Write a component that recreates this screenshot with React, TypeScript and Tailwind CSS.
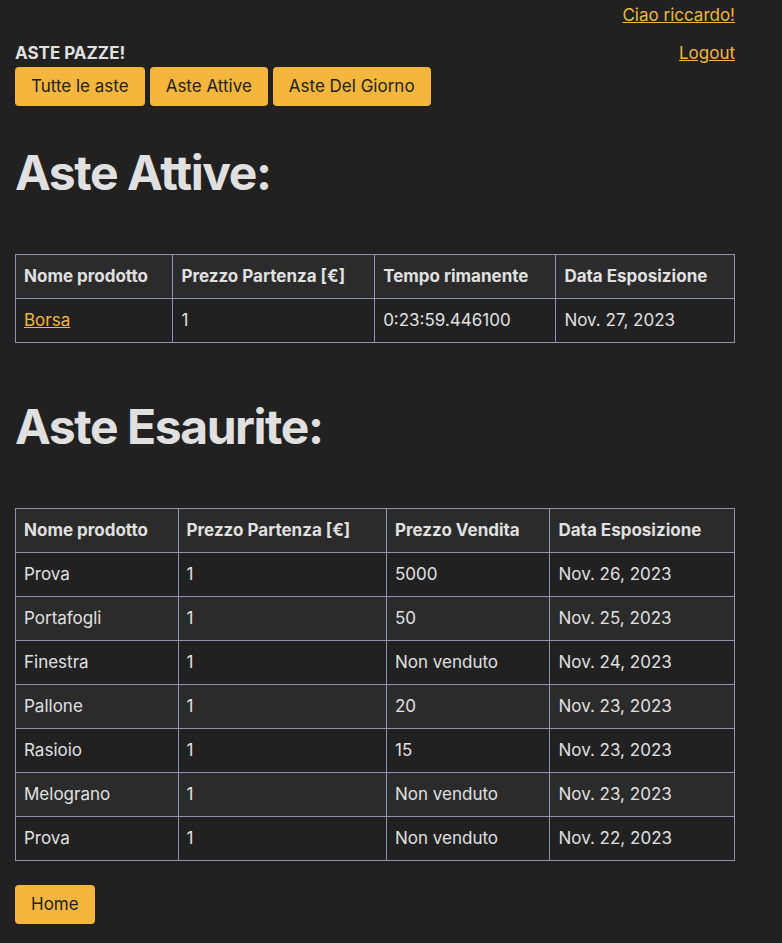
const active = [{ name: "Borsa", price: "1", time: "0:23:59.446100", date: "Nov. 27, 2023" }];

const sold = [
  { name: "Prova", price: "1", sale: "5000", date: "Nov. 26, 2023" },
  { name: "Portafogli", price: "1", sale: "50", date: "Nov. 25, 2023" },
  { name: "Finestra", price: "1", sale: "Non venduto", date: "Nov. 24, 2023" },
  { name: "Pallone", price: "1", sale: "20", date: "Nov. 23, 2023" },
  { name: "Rasioio", price: "1", sale: "15", date: "Nov. 23, 2023" },
  { name: "Melograno", price: "1", sale: "Non venduto", date: "Nov. 23, 2023" },
  { name: "Prova", price: "1", sale: "Non venduto", date: "Nov. 22, 2023" },
];

const th = "border border-[#8e93aa] px-2 h-[44px] text-left font-bold";
const td = "border border-[#8e93aa] px-2 h-[44px]";

const NavButton: React.FC<{ label: string }> = ({ label }) => (
  <button className="bg-[#f4b63d] text-[#222] rounded-[4px] h-[39px] px-[16px] text-[17px]">
    {label}
  </button>
);

export default function App() {
  return (
    <div
      className="min-h-[943px] bg-[#212121] text-[#e0e0e0] text-[17px] px-[15px] pb-[19px]"
      style={{ fontFamily: "Inter, 'Noto Sans', sans-serif" }}
    >
      <div className="w-[720px]">
        <div className="flex justify-end pt-[3px]">
          <a href="#" className="text-[#f4b63d] underline text-[17px] leading-[24px]">
            Ciao riccardo!
          </a>
        </div>
        <div className="flex justify-between items-start mt-[14px]">
          <div>
            <div className="font-bold text-[17px] leading-[24px] mb-[2px]">ASTE PAZZE!</div>
            <div className="flex gap-[5px]">
              <NavButton label="Tutte le aste" />
              <NavButton label="Aste Attive" />
              <NavButton label="Aste Del Giorno" />
            </div>
          </div>
          <a href="#" className="text-[#f4b63d] underline text-[17px] leading-[24px]">
            Logout
          </a>
        </div>

        <h1 className="text-[48px] font-bold leading-none tracking-[-0.03em] mt-[43px] mb-[57px]">Aste Attive:</h1>
        <table className="w-full border-collapse">
          <thead>
            <tr className="bg-[#2b2b2b]">
              <th className={th}>Nome prodotto</th>
              <th className={th}>Prezzo Partenza [€]</th>
              <th className={th}>Tempo rimanente</th>
              <th className={th}>Data Esposizione</th>
            </tr>
          </thead>
          <tbody>
            {active.map((r, i) => (
              <tr key={i}>
                <td className={td}>
                  <a href="#" className="text-[#f4b63d] underline">{r.name}</a>
                </td>
                <td className={td}>{r.price}</td>
                <td className={td}>{r.time}</td>
                <td className={td}>{r.date}</td>
              </tr>
            ))}
          </tbody>
        </table>

        <h1 className="text-[48px] font-bold leading-none tracking-[-0.03em] mt-[60px] mb-[57px]">Aste Esaurite:</h1>
        <table className="w-full border-collapse">
          <thead>
            <tr className="bg-[#2b2b2b]">
              <th className={th}>Nome prodotto</th>
              <th className={th}>Prezzo Partenza [€]</th>
              <th className={th}>Prezzo Vendita</th>
              <th className={th}>Data Esposizione</th>
            </tr>
          </thead>
          <tbody>
            {sold.map((r, i) => (
              <tr key={i} className={i % 2 === 1 ? "bg-[#2b2b2b]" : ""}>
                <td className={td}>{r.name}</td>
                <td className={td}>{r.price}</td>
                <td className={td}>{r.sale}</td>
                <td className={td}>{r.date}</td>
              </tr>
            ))}
          </tbody>
        </table>

        <div className="mt-[24px]">
          <NavButton label="Home" />
        </div>
      </div>
    </div>
  );
}
